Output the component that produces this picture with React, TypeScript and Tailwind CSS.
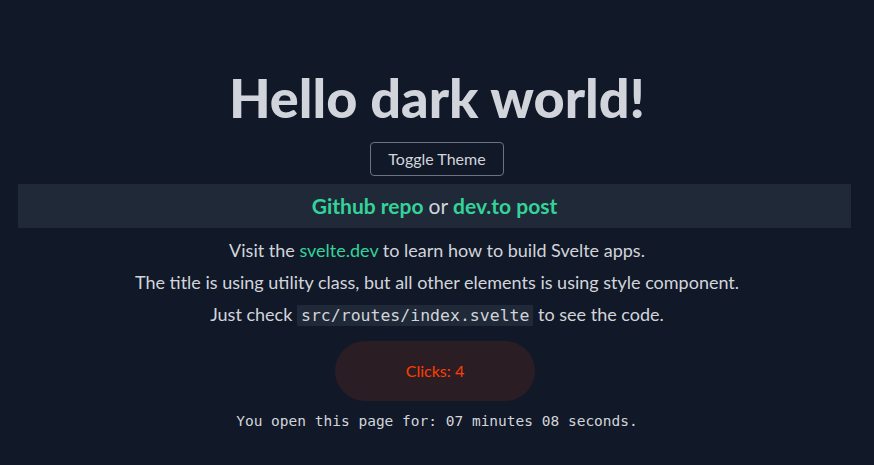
import React, { useState } from "react";

const App = () => {
	const [count, setCount] = useState(4);

	return (
		<div className="min-h-screen w-full bg-[#111827] text-[#d1d5db] pt-[64px] font-['Lato',sans-serif]">
			<div className="flex flex-col items-center">
				<h1 className="text-[54px] leading-[68px] font-black font-['Lato',sans-serif]">
					Hello dark world!
				</h1>
				<button className="mt-[10px] h-[34px] px-[17px] rounded border border-[#6b7280] text-[16px] text-[#d1d5db]">
					Toggle Theme
				</button>
			</div>
			<div className="ml-[18px] mr-[23px] mt-[8px] h-[44px] bg-[#1f2937] flex items-center justify-center text-[21px]">
				<a className="font-bold text-[#34d399]">Github repo</a>
				<span className="mx-[5px]">or</span>
				<a className="font-bold text-[#34d399]">dev.to post</a>
			</div>
			<div className="flex flex-col items-center text-[18px] mt-[10px] gap-[8px]">
				<p className="leading-[24px]">
					Visit the <a className="text-[#34d399]">svelte.dev</a> to learn how to build Svelte apps.
				</p>
				<p className="leading-[24px]">
					The title is using utility class, but all other elements is using style component.
				</p>
				<p className="leading-[24px]">
					Just check{" "}
					<code className="bg-[#1f2937] px-[4px] py-[1px] font-['DejaVu_Sans_Mono',monospace] text-[16.5px]">
						src/routes/index.svelte
					</code>{" "}
					to see the code.
				</p>
				<button
					onClick={() => setCount(count + 1)}
					className="mt-[5px] mr-[4px] w-[200px] h-[60px] rounded-full bg-[#2b1d24] text-[#ff3e00] text-[16px]"
				>
					Clicks: {count}
				</button>
				<p className="mt-[2px] font-['DejaVu_Sans_Mono',monospace] text-[14.5px]">
					You open this page for: 07 minutes 08 seconds.
				</p>
			</div>
		</div>
	);
};

export default App;
